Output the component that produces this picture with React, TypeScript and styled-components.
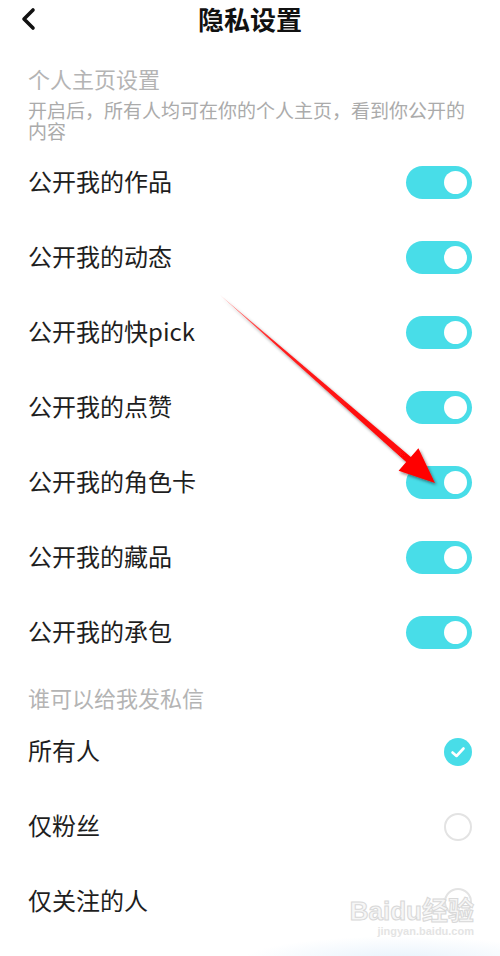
import React from "react"
import styled, { createGlobalStyle } from "styled-components"

const Global = createGlobalStyle`
    body {
        margin: 0;
        background: #ffffff;
        font-family: "Noto Sans CJK SC", "Noto Sans", sans-serif;
    }
`

const Page = styled.div`
    position: relative;
    width: 500px;
    height: 956px;
    overflow: hidden;
    background: #ffffff;
    padding: 0 28px;
    box-sizing: border-box;
`

const NavBar = styled.div`
    position: relative;
    height: 40px;
    display: flex;
    align-items: center;
    justify-content: center;

    .back {
        position: absolute;
        left: -11px;
        top: 7px;
    }

    h1 {
        margin: 0;
        font-size: 26px;
        font-weight: 700;
        color: #111111;
        line-height: 38px;
        padding-bottom: 2px;
    }
`

const SectionTitle = styled.div<{ $gap: number }>`
    margin-top: ${p => p.$gap}px;
    font-size: 22px;
    line-height: 26px;
    padding-bottom: 4px;
    color: #b4b4b4;
`

const Desc = styled.p`
    margin: 4px 0 0;
    font-size: 19px;
    line-height: 21px;
    color: #ababab;
`

const List = styled.div<{ $gap: number }>`
    margin-top: ${p => p.$gap}px;
    display: flex;
    flex-direction: column;
`

const Row = styled.div`
    height: 75px;
    display: flex;
    align-items: center;
    justify-content: space-between;

    span {
        font-size: 24px;
        line-height: 30px;
        padding-bottom: 4px;
        color: #1e1e1e;
    }
`

const Toggle = styled.div<{ $on: boolean }>`
    width: 66px;
    height: 33px;
    border-radius: 17px;
    background: ${p => (p.$on ? "#48dde8" : "#e3e3e3")};
    display: flex;
    align-items: center;
    justify-content: ${p => (p.$on ? "flex-end" : "flex-start")};
    padding: 0 5px;
    box-sizing: border-box;

    &::after {
        content: "";
        width: 23px;
        height: 23px;
        border-radius: 50%;
        background: #ffffff;
    }
`

const Radio = styled.div<{ $checked: boolean }>`
    width: 28px;
    height: 28px;
    border-radius: 50%;
    box-sizing: border-box;
    background: ${p => (p.$checked ? "#48dde8" : "transparent")};
    border: ${p => (p.$checked ? "none" : "2px solid #e3e3e3")};
    display: flex;
    align-items: center;
    justify-content: center;
`

const Arrow = styled.svg`
    position: absolute;
    left: 0;
    top: 0;
    pointer-events: none;
`

const Watermark = styled.div`
    position: absolute;
    right: 26px;
    bottom: 18px;
    color: #e2e2e2;
    text-align: right;
    font-family: "Liberation Sans", "Noto Sans CJK SC", sans-serif;

    .brand {
        font-size: 26px;
        font-weight: 700;
        line-height: 26px;
        -webkit-text-stroke: 1px #d8d8d8;
        color: #f6f6f6;
    }

    .url {
        font-size: 11px;
        font-weight: 700;
        line-height: 14px;
        color: #e4e4e4;
    }
`

const Glow = styled.div`
    position: absolute;
    right: -60px;
    bottom: -30px;
    width: 320px;
    height: 50px;
    border-radius: 50%;
    background: radial-gradient(ellipse at center, rgba(220, 236, 250, 0.7), rgba(255, 255, 255, 0) 70%);
`

const profileItems = [
    "公开我的作品",
    "公开我的动态",
    "公开我的快pick",
    "公开我的点赞",
    "公开我的角色卡",
    "公开我的藏品",
    "公开我的承包",
]

const msgItems = [
    { label: "所有人", checked: true },
    { label: "仅粉丝", checked: false },
    { label: "仅关注的人", checked: false },
]

export default function App() {
    return <>
        <Global />
        <Page>
            <NavBar>
                <svg className="back" width="24" height="24" viewBox="0 0 24 24">
                    <path d="M16 3 L7 12 L16 21" fill="none" stroke="#111" strokeWidth="3.6" strokeLinecap="round" strokeLinejoin="round" />
                </svg>
                <h1>隐私设置</h1>
            </NavBar>

            <SectionTitle $gap={25}>个人主页设置</SectionTitle>
            <Desc>开启后，所有人均可在你的个人主页，看到你公开的内容</Desc>

            <List $gap={4}>
                {profileItems.map(t => (
                    <Row key={t}>
                        <span>{t}</span>
                        <Toggle $on />
                    </Row>
                ))}
            </List>

            <SectionTitle $gap={14}>谁可以给我发私信</SectionTitle>
            <List $gap={0}>
                {msgItems.map(m => (
                    <Row key={m.label}>
                        <span>{m.label}</span>
                        <Radio $checked={m.checked}>
                            {m.checked && (
                                <svg width="16" height="16" viewBox="0 0 16 16">
                                    <path d="M2.5 8.5 L6.5 12 L13.5 4.5" fill="none" stroke="#fff" strokeWidth="2.6" strokeLinecap="round" strokeLinejoin="round" />
                                </svg>
                            )}
                        </Radio>
                    </Row>
                ))}
            </List>

            <Glow />
            <Watermark>
                <div className="brand">Baidu经验</div>
                <div className="url">jingyan.baidu.com</div>
            </Watermark>

            <Arrow width="500" height="956" viewBox="0 0 500 956">
                <defs>
                    <linearGradient id="shaft" x1="220" y1="295" x2="435" y2="483" gradientUnits="userSpaceOnUse">
                        <stop offset="0" stopColor="#ff9a9a" />
                        <stop offset="0.25" stopColor="#ff2020" />
                        <stop offset="1" stopColor="#ff0000" />
                    </linearGradient>
                    <filter id="shadow" x="-20%" y="-20%" width="140%" height="140%">
                        <feDropShadow dx="1.5" dy="2" stdDeviation="1.5" floodColor="#000" floodOpacity="0.45" />
                    </filter>
                </defs>
                <polygon
                    points="220,295 410.8,456.9 418.4,448.2 435,483 398.6,470.8 406.2,462.1"
                    fill="url(#shaft)"
                    filter="url(#shadow)"
                />
            </Arrow>
        </Page>
    </>
}
